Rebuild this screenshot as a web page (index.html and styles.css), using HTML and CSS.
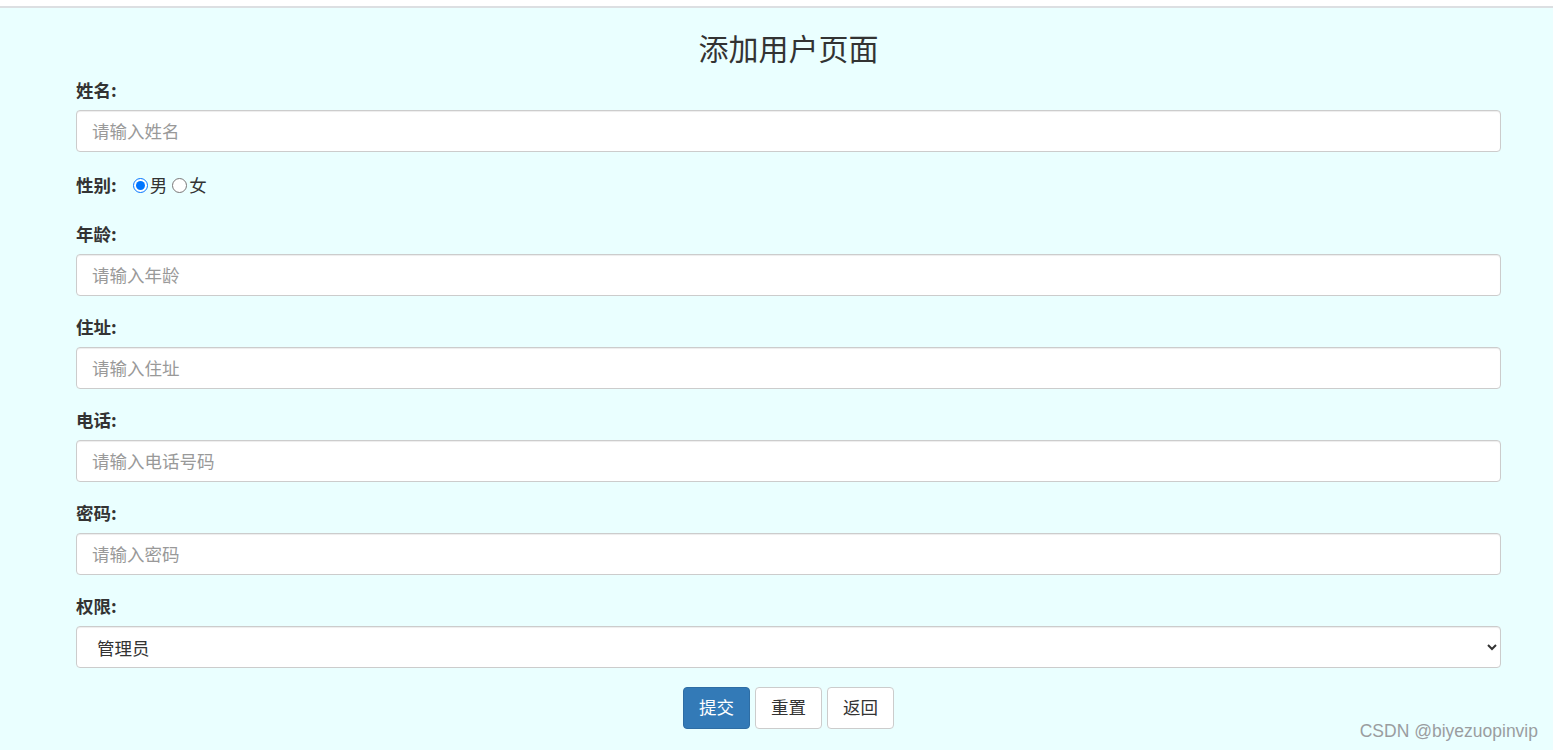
FILE: index.html
```html
<!DOCTYPE html>
<html lang="zh-CN">
<head>
<meta charset="utf-8">
<title>添加用户页面</title>
<link rel="stylesheet" href="styles.css">
</head>
<body>
<div class="topbar"></div>
<main class="page">
  <h1 class="title">添加用户页面</h1>
  <form class="form">
    <div class="group">
      <label class="lbl">姓名:</label>
      <input class="ctrl" type="text" placeholder="请输入姓名">
    </div>
    <div class="group group-radio">
      <label class="lbl">性别:</label>
      <span class="radios">
        <input type="radio" name="sex" id="m" checked><label for="m">男</label>
        <input type="radio" name="sex" id="f"><label for="f">女</label>
      </span>
    </div>
    <div class="group">
      <label class="lbl">年龄:</label>
      <input class="ctrl" type="text" placeholder="请输入年龄">
    </div>
    <div class="group">
      <label class="lbl">住址:</label>
      <input class="ctrl" type="text" placeholder="请输入住址">
    </div>
    <div class="group">
      <label class="lbl">电话:</label>
      <input class="ctrl" type="text" placeholder="请输入电话号码">
    </div>
    <div class="group">
      <label class="lbl">密码:</label>
      <input class="ctrl" type="password" placeholder="请输入密码">
    </div>
    <div class="group">
      <label class="lbl">权限:</label>
      <select class="ctrl sel">
        <option>管理员</option>
        <option>普通用户</option>
      </select>
    </div>
    <div class="actions">
      <button type="button" class="btn btn-primary">提交</button>
      <button type="reset" class="btn">重置</button>
      <button type="button" class="btn">返回</button>
    </div>
  </form>
</main>
<div class="watermark">CSDN @biyezuopinvip</div>
</body>
</html>
```

FILE: styles.css
```css
html, body {
  margin: 0;
  padding: 0;
}
body {
  background: #eaffff;
  font-family: "Liberation Sans", "Noto Sans CJK SC", sans-serif;
  color: #333;
  font-size: 17.5px;
  height: 750px;
  overflow: hidden;
  position: relative;
}
.topbar {
  height: 6px;
  background: #fff;
  border-bottom: 2px solid #dcdfe2;
}
.page {
  padding: 0 52px 0 76px;
}
.title {
  margin: 0;
  height: 60px;
  line-height: 60px;
  padding-top: 9px;
  text-align: center;
  font-weight: normal;
  font-size: 30px;
  color: #333;
  font-family: "Noto Sans CJK SC", sans-serif;
}
.form {
  display: flex;
  flex-direction: column;
}
.group {
  display: flex;
  flex-direction: column;
  margin-bottom: 18px;
}
.lbl {
  font-weight: bold;
  font-size: 17.5px;
  line-height: 28px;
  height: 28px;
  margin-bottom: 5px;
  margin-top: -1px;
  padding-bottom: 1px;
  font-family: "Noto Sans CJK SC", sans-serif;
}
.group-radio {
  flex-direction: row;
  align-items: center;
  margin-bottom: 21px;
}
.group-radio .lbl {
  margin-bottom: 0;
  margin-top: 0;
  padding-bottom: 0;
  margin-right: 16px;
  line-height: 30px;
  height: 30px;
}
.radios {
  display: flex;
  align-items: center;
  font-family: "Noto Sans CJK SC", sans-serif;
  font-size: 17.5px;
  line-height: 30px;
}
.radios input {
  margin: 0;
  width: 15px;
  height: 15px;
  accent-color: #0075ff;
}
.radios label {
  margin: 0 5px 0 2px;
}
.ctrl {
  box-sizing: border-box;
  height: 42px;
  width: 100%;
  padding: 0 15px 2px;
  font-size: 17.5px;
  font-family: "Noto Sans CJK SC", sans-serif;
  color: #333;
  background: #fff;
  border: 1px solid #ccc;
  border-radius: 4px;
  box-shadow: inset 0 1px 1px rgba(0,0,0,.075);
  outline: none;
}
.ctrl::placeholder {
  color: #999;
}
.sel {
  padding-left: 16px;
  padding-bottom: 0;
}
.actions {
  display: flex;
  justify-content: center;
  gap: 5px;
  margin-top: 1px;
}
.btn {
  box-sizing: border-box;
  height: 42px;
  width: 67px;
  padding: 0 0 3px;
  font-size: 17.5px;
  font-family: "Noto Sans CJK SC", sans-serif;
  color: #333;
  background: #fff;
  border: 1px solid #ccc;
  border-radius: 4px;
  cursor: pointer;
}
.btn-primary {
  background: #337ab7;
  border-color: #2e6da4;
  color: #fff;
}
.watermark {
  position: absolute;
  right: 15px;
  bottom: 8px;
  font-family: "Liberation Sans", sans-serif;
  font-size: 17.5px;
  color: #9a9d9f;
}
```
